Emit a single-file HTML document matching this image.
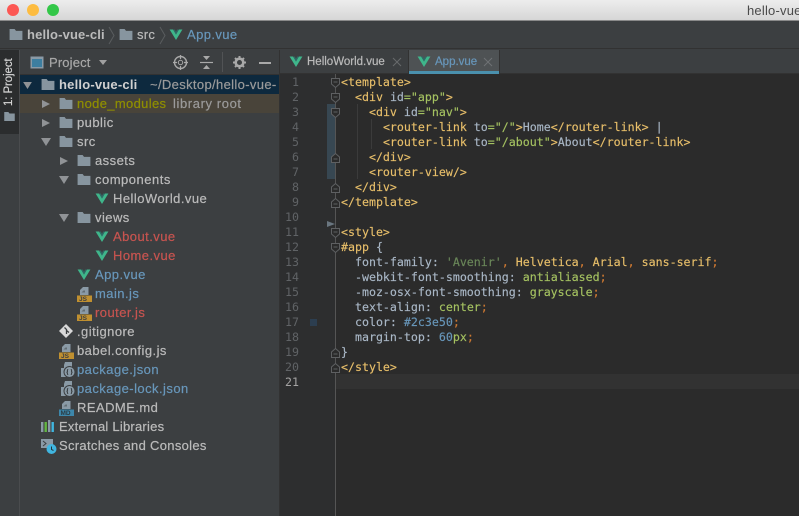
<!DOCTYPE html>
<html><head><meta charset="utf-8">
<style>
*{box-sizing:border-box}
html,body{margin:0;padding:0;width:799px;height:516px;overflow:hidden;background:#3c3f41}
body{position:relative;font-family:"Liberation Sans",sans-serif;font-size:13px;color:#bbb}
.a{position:absolute}
.t{position:absolute;white-space:pre;line-height:19px;height:19px;letter-spacing:.45px;color:#bbbbbb;-webkit-text-stroke:.2px}
svg{position:absolute;overflow:visible}
.c{position:absolute;left:341px;white-space:pre;font-family:"DejaVu Sans Mono","Liberation Mono",monospace;font-size:11.62px;line-height:15px;height:15px;color:#a9b7c6;-webkit-text-stroke:.15px}
.n{position:absolute;left:280px;width:19px;text-align:right;font-family:"DejaVu Sans Mono",monospace;font-size:11.62px;line-height:15px;height:15px;color:#606366}
.y{color:#e8bf6a}.g{color:#a5c261}.o{color:#cc7832}.b{color:#6897bb}.h{color:#a9b7c6}.s{color:#6a8759}
.bl{color:#6897bb}.rd{color:#c75450}
</style></head><body>
<svg width="0" height="0" style="position:absolute"><defs>
<symbol id="f" viewBox="0 0 14 12"><path d="M0 0H5.5L7 2H14V12H0Z" fill="#87959f"/></symbol>
<symbol id="v" viewBox="0 0 14 12"><path d="M0 .5H3.8L7 6 10.2 .5H14L7 12Z" fill="#3fb68b"/><path d="M3.8 .5H5.6L7 3 8.4 .5H10.2L7 6Z" fill="#2f6a66"/></symbol>
<symbol id="js" viewBox="0 0 15 15"><path d="M6 0H11.5V8H3V3Z" fill="#8a9aa6"/><path d="M6.5 3.5L4.5 5.5H8V3.5Z" fill="#3c3f41" opacity=".5"/><rect y="8.5" width="15" height="6.5" fill="#c09030"/><text x="2" y="14" font-family="Liberation Sans,sans-serif" font-size="6.5" font-weight="bold" fill="#3c3f41">JS</text></symbol>
<symbol id="fr" viewBox="0 0 8 10"><path d="M0 1L8 5 0 9Z" fill="#909396"/></symbol>
<symbol id="fd" viewBox="0 0 10 8"><path d="M0 0H10L5 8Z" fill="#909396"/></symbol>
<symbol id="pj" viewBox="0 0 14 16"><path d="M4 0H11V6H3V3Z" fill="#8a9aa6"/><path d="M0 6H9V15H0Z" fill="#8a9aa6"/><circle cx="8.5" cy="10" r="5.5" fill="#8a9aa6" stroke="#3c3f41"/><path d="M7.2 7.5Q6.2 7.5 6.4 9T5.6 10Q6.4 10.3 6.4 11.5T7.2 12.5M9.8 7.5Q10.8 7.5 10.6 9T11.4 10Q10.6 10.3 10.6 11.5T9.8 12.5" fill="none" stroke="#33373a"/></symbol>
</defs></svg>

<!-- title bar -->
<div class="a" style="left:0;top:0;width:799px;height:20px;background:linear-gradient(#ededed,#d6d6d6)"></div>
<div class="a" style="left:0;top:20px;width:799px;height:1px;background:#8a8a8a"></div>
<div class="a" style="left:7px;top:4px;width:12px;height:12px;border-radius:50%;background:#fc5753"></div>
<div class="a" style="left:27px;top:4px;width:12px;height:12px;border-radius:50%;background:#fdbc40"></div>
<div class="a" style="left:47px;top:4px;width:12px;height:12px;border-radius:50%;background:#33c748"></div>
<div class="t" style="left:747px;top:1px;color:#4a4a4a;letter-spacing:.2px;-webkit-text-stroke:0">hello-vue</div>

<!-- breadcrumb -->
<div class="a" style="left:0;top:21px;width:799px;height:28px;background:#3c3f41;border-bottom:1px solid #323232"></div>
<svg style="left:9px;top:29px" width="14" height="11"><use href="#f" width="14" height="11"/></svg>
<div class="t" style="left:27px;top:25px;font-weight:bold;letter-spacing:.15px;-webkit-text-stroke:0">hello-vue-cli</div>
<svg style="left:108px;top:27px" width="8" height="17"><path d="M1 0L6 8.5 1 17" fill="none" stroke="#5a5d5f"/></svg>
<svg style="left:119px;top:29px" width="14" height="11"><use href="#f" width="14" height="11"/></svg>
<div class="t" style="left:137px;top:25px;letter-spacing:.3px">src</div>
<svg style="left:159px;top:27px" width="8" height="17"><path d="M1 0L6 8.5 1 17" fill="none" stroke="#5a5d5f"/></svg>
<svg style="left:169px;top:29px" width="14" height="11"><use href="#v" width="14" height="11"/></svg>
<div class="t" style="left:187px;top:25px;color:#6897bb;letter-spacing:.4px">App.vue</div>

<!-- left stripe -->
<div class="a" style="left:0;top:50px;width:19px;height:466px;background:#3c3f41"></div>
<div class="a" style="left:0;top:50px;width:19px;height:84px;background:#2b2d2e"></div>
<div class="a" style="left:19px;top:50px;width:1px;height:466px;background:#4a4c4e"></div>
<div class="a" style="left:2px;top:106px;white-space:pre;transform-origin:0 0;transform:rotate(-90deg);font-size:11.5px;line-height:15px;color:#d8d8d8;letter-spacing:-.1px;-webkit-text-stroke:.15px">1: Project</div>
<svg style="left:4px;top:112px" width="11" height="9"><use href="#f" width="11" height="9"/></svg>

<!-- project panel header -->
<svg style="left:30px;top:56px" width="14" height="13"><rect x=".5" y=".5" width="13" height="12" fill="#8a9aa6"/><rect x="2" y="3" width="10" height="8" fill="#3d7ea0"/></svg>
<div class="t" style="left:49px;top:53px;letter-spacing:.15px;color:#a8a8a8">Project</div>
<svg style="left:99px;top:60px" width="9" height="6"><path d="M0 0H8L4 5Z" fill="#a0a0a0"/></svg>
<svg style="left:173px;top:55px" width="15" height="15"><circle cx="7.5" cy="7.5" r="6" fill="none" stroke="#a9a9a9" stroke-width="1.4"/><circle cx="7.5" cy="7.5" r="2.2" fill="none" stroke="#a9a9a9"/><path d="M7.5 0V4M7.5 11V15M0 7.5H4M11 7.5H15" stroke="#a9a9a9" stroke-width="1.2"/></svg>
<svg style="left:200px;top:55px" width="13" height="15"><path d="M0 7.5H13" stroke="#a9a9a9" stroke-width="1.2"/><path d="M3 1H10L6.5 5ZM3 14H10L6.5 10Z" fill="#a9a9a9"/></svg>
<div class="a" style="left:222px;top:52px;width:1px;height:20px;background:#515355"></div>
<svg style="left:233px;top:56px" width="13" height="13"><circle cx="6.5" cy="6.5" r="3.8" fill="none" stroke="#a9a9a9" stroke-width="2.6"/><path d="M6.5 0V2.5M6.5 10.5V13M0 6.5H2.5M10.5 6.5H13M2 2L3.7 3.7M9.3 9.3L11 11M11 2L9.3 3.7M3.7 9.3L2 11" stroke="#a9a9a9" stroke-width="2"/></svg>
<div class="a" style="left:259px;top:62px;width:12px;height:1.5px;background:#a9a9a9"></div>
<div class="a" style="left:20px;top:74px;width:259px;height:1px;background:#323232"></div>

<!-- tree rows -->
<div class="a" style="left:20px;top:75px;width:259px;height:19px;background:#0d293e"></div>
<div class="a" style="left:20px;top:94px;width:259px;height:19px;background:#49443a"></div>

<svg style="left:23px;top:82px" width="9" height="7"><use href="#fd" width="9" height="7"/></svg>
<svg style="left:41px;top:79px" width="14" height="11"><use href="#f" width="14" height="11"/></svg>
<div class="t" style="left:59px;top:75px;font-weight:bold;color:#d0d0d0;letter-spacing:.2px;-webkit-text-stroke:0">hello-vue-cli</div>
<div class="t" style="left:150px;top:75px;width:126px;overflow:hidden;color:#9a9a9a;letter-spacing:.35px">~/Desktop/hello-vue-</div>

<svg style="left:42px;top:99px" width="8" height="10"><use href="#fr" width="8" height="10"/></svg>
<svg style="left:59px;top:98px" width="14" height="11"><use href="#f" width="14" height="11"/></svg>
<div class="t" style="left:77px;top:94px;color:#8f8f00;letter-spacing:.34px">node_modules</div>
<div class="t" style="left:173px;top:94px;color:#9a9a9a;letter-spacing:.6px">library root</div>

<svg style="left:42px;top:118px" width="8" height="10"><use href="#fr" width="8" height="10"/></svg>
<svg style="left:59px;top:117px" width="14" height="11"><use href="#f" width="14" height="11"/></svg>
<div class="t" style="left:77px;top:113px">public</div>

<svg style="left:41px;top:138px" width="10" height="8"><use href="#fd" width="10" height="8"/></svg>
<svg style="left:59px;top:136px" width="14" height="11"><use href="#f" width="14" height="11"/></svg>
<div class="t" style="left:77px;top:132px">src</div>

<svg style="left:60px;top:156px" width="8" height="10"><use href="#fr" width="8" height="10"/></svg>
<svg style="left:77px;top:155px" width="14" height="11"><use href="#f" width="14" height="11"/></svg>
<div class="t" style="left:95px;top:151px">assets</div>

<svg style="left:59px;top:176px" width="10" height="8"><use href="#fd" width="10" height="8"/></svg>
<svg style="left:77px;top:174px" width="14" height="11"><use href="#f" width="14" height="11"/></svg>
<div class="t" style="left:95px;top:170px;letter-spacing:.5px">components</div>

<svg style="left:95px;top:193px" width="14" height="11"><use href="#v" width="14" height="11"/></svg>
<div class="t" style="left:113px;top:189px">HelloWorld.vue</div>

<svg style="left:59px;top:214px" width="10" height="8"><use href="#fd" width="10" height="8"/></svg>
<svg style="left:77px;top:212px" width="14" height="11"><use href="#f" width="14" height="11"/></svg>
<div class="t" style="left:95px;top:208px">views</div>

<svg style="left:95px;top:231px" width="14" height="11"><use href="#v" width="14" height="11"/></svg>
<div class="t" style="left:113px;top:227px;color:#c75450">About.vue</div>

<svg style="left:95px;top:250px" width="14" height="11"><use href="#v" width="14" height="11"/></svg>
<div class="t" style="left:113px;top:246px;color:#c75450">Home.vue</div>

<svg style="left:77px;top:269px" width="14" height="11"><use href="#v" width="14" height="11"/></svg>
<div class="t" style="left:95px;top:265px;color:#6897bb">App.vue</div>

<svg style="left:77px;top:287px" width="15" height="15"><use href="#js" width="15" height="15"/></svg>
<div class="t" style="left:95px;top:284px;color:#6897bb">main.js</div>

<svg style="left:77px;top:306px" width="15" height="15"><use href="#js" width="15" height="15"/></svg>
<div class="t" style="left:95px;top:303px;color:#c75450">router.js</div>

<svg style="left:59px;top:324px" width="14" height="14"><path d="M7 0L14 7 7 14 0 7Z" fill="#d8d8d8"/><path d="M5.5 3.5L7.5 5.5V10M7.5 6.5L10 8.5" stroke="#3c3f41" fill="none" stroke-width="1.3"/></svg>
<div class="t" style="left:77px;top:322px">.gitignore</div>

<svg style="left:59px;top:344px" width="15" height="15"><use href="#js" width="15" height="15"/></svg>
<div class="t" style="left:77px;top:341px">babel.config.js</div>

<svg style="left:61px;top:362px" width="14" height="16"><use href="#pj" width="14" height="16"/></svg>
<div class="t" style="left:77px;top:360px;color:#6897bb">package.json</div>

<svg style="left:61px;top:381px" width="14" height="16"><use href="#pj" width="14" height="16"/></svg>
<div class="t" style="left:77px;top:379px;color:#6897bb">package-lock.json</div>

<svg style="left:59px;top:401px" width="15" height="15"><path d="M6 0H11.5V8H3V3Z" fill="#8a9aa6"/><path d="M6.5 3.5L4.5 5.5H8V3.5Z" fill="#3c3f41" opacity=".5"/><rect y="8.5" width="15" height="6.5" fill="#3d87ab"/><text x="1.5" y="14" font-family="Liberation Sans,sans-serif" font-size="6.5" font-weight="bold" fill="#2b3a42">MD</text></svg>
<div class="t" style="left:77px;top:398px">README.md</div>

<svg style="left:41px;top:420px" width="14" height="12"><rect y="2" width="2.4" height="10" fill="#8a9aa6"/><rect x="3.5" y="2" width="2.4" height="10" fill="#62b543"/><rect x="7" y="0" width="2.4" height="12" fill="#8a9aa6"/><rect x="10.5" y="2" width="2.4" height="10" fill="#40b6e0"/></svg>
<div class="t" style="left:59px;top:417px;letter-spacing:.23px">External Libraries</div>

<svg style="left:41px;top:438px" width="15" height="16"><path d="M0 1H12V10H0Z" fill="#8a9aa6"/><path d="M2 3L5 5.5 2 8" stroke="#3c3f41" fill="none"/><circle cx="10.5" cy="11" r="5" fill="#40b6e0"/><path d="M10.5 8.5V11.5L12.5 12.5" stroke="#24343c" fill="none"/></svg>
<div class="t" style="left:59px;top:436px;letter-spacing:.31px">Scratches and Consoles</div>

<!-- tab bar -->
<div class="a" style="left:279px;top:50px;width:1px;height:466px;background:#323232"></div>
<div class="a" style="left:280px;top:50px;width:519px;height:24px;background:#3c3f41;border-bottom:1px solid #323232"></div>
<div class="a" style="left:408px;top:50px;width:91px;height:24px;background:#4e5254;border-bottom:3px solid #4a90ad"></div>
<div class="a" style="left:408px;top:50px;width:1px;height:24px;background:#323232"></div>
<div class="a" style="left:499px;top:50px;width:1px;height:24px;background:#323232"></div>
<svg style="left:289px;top:56px" width="14" height="11"><use href="#v" width="14" height="11"/></svg>
<div class="t" style="left:307px;top:53px;font-size:11.5px;letter-spacing:0">HelloWorld.vue</div>
<svg style="left:393px;top:58px" width="8" height="8"><path d="M0 0L8 8M8 0L0 8" stroke="#686a6c"/></svg>
<svg style="left:417px;top:56px" width="14" height="11"><use href="#v" width="14" height="11"/></svg>
<div class="t" style="left:435px;top:53px;font-size:11.5px;letter-spacing:0;color:#6897bb">App.vue</div>
<svg style="left:484px;top:58px" width="8" height="8"><path d="M0 0L8 8M8 0L0 8" stroke="#6f7274"/></svg>

<!-- editor -->
<div class="a" style="left:280px;top:74px;width:519px;height:442px;background:#2b2b2b"></div>
<div class="a" style="left:280px;top:74px;width:55px;height:442px;background:#2d2e2f"></div>
<div class="a" style="left:336px;top:374px;width:463px;height:15px;background:#323232"></div>
<div class="a" style="left:335px;top:74px;width:1px;height:442px;background:#555"></div>
<div class="a" style="left:327px;top:104px;width:8px;height:75px;background:#374752"></div>
<div class="a" style="left:310px;top:319px;width:7px;height:7px;background:#2c3e50"></div>
<svg style="left:327px;top:221px" width="8" height="6"><path d="M0 0L8 3 0 6Z" fill="#6a7680"/></svg>

<!-- fold markers -->
<svg style="left:330px;top:78px" width="12" height="300" fill="#2b2b2b" stroke="#5e6062" stroke-width="1">
<path d="M1.5 .5H9.5V6L5.5 9.5 1.5 6ZM3.5 4H7.5"/>
<path transform="translate(0,15)" d="M1.5 .5H9.5V6L5.5 9.5 1.5 6ZM3.5 4H7.5"/>
<path transform="translate(0,30)" d="M1.5 .5H9.5V6L5.5 9.5 1.5 6ZM3.5 4H7.5"/>
<path transform="translate(0,75)" d="M1.5 9.5H9.5V4L5.5 .5 1.5 4ZM3.5 6H7.5"/>
<path transform="translate(0,105)" d="M1.5 9.5H9.5V4L5.5 .5 1.5 4ZM3.5 6H7.5"/>
<path transform="translate(0,120)" d="M1.5 9.5H9.5V4L5.5 .5 1.5 4ZM3.5 6H7.5"/>
<path transform="translate(0,150)" d="M1.5 .5H9.5V6L5.5 9.5 1.5 6ZM3.5 4H7.5"/>
<path transform="translate(0,165)" d="M1.5 .5H9.5V6L5.5 9.5 1.5 6ZM3.5 4H7.5"/>
<path transform="translate(0,270)" d="M1.5 9.5H9.5V4L5.5 .5 1.5 4ZM3.5 6H7.5"/>
<path transform="translate(0,285)" d="M1.5 9.5H9.5V4L5.5 .5 1.5 4ZM3.5 6H7.5"/>
</svg>
<!-- indent guides -->
<div class="a" style="left:357px;top:104px;width:1px;height:75px;background:#3b3b3b"></div>
<div class="a" style="left:371px;top:119px;width:1px;height:30px;background:#3b3b3b"></div>

<!-- line numbers -->
<div class="n" style="top:75px">1</div><div class="n" style="top:90px">2</div><div class="n" style="top:105px">3</div><div class="n" style="top:120px">4</div><div class="n" style="top:135px">5</div><div class="n" style="top:150px">6</div><div class="n" style="top:165px">7</div><div class="n" style="top:180px">8</div><div class="n" style="top:195px">9</div><div class="n" style="top:210px">10</div><div class="n" style="top:225px">11</div><div class="n" style="top:240px">12</div><div class="n" style="top:255px">13</div><div class="n" style="top:270px">14</div><div class="n" style="top:285px">15</div><div class="n" style="top:300px">16</div><div class="n" style="top:315px">17</div><div class="n" style="top:330px">18</div><div class="n" style="top:345px">19</div><div class="n" style="top:360px">20</div><div class="n" style="top:375px;color:#a4a3a3">21</div>

<!-- code -->
<div class="c y" style="top:75px">&lt;template&gt;</div>
<div class="c" style="top:90px">  <span class="y">&lt;div</span> id<span class="g">="app"</span><span class="y">&gt;</span></div>
<div class="c" style="top:105px">    <span class="y">&lt;div</span> id<span class="g">="nav"</span><span class="y">&gt;</span></div>
<div class="c" style="top:120px">      <span class="y">&lt;router-link</span> to<span class="g">="/"</span><span class="y">&gt;</span>Home<span class="y">&lt;/router-link&gt;</span> |</div>
<div class="c" style="top:135px">      <span class="y">&lt;router-link</span> to<span class="g">="/about"</span><span class="y">&gt;</span>About<span class="y">&lt;/router-link&gt;</span></div>
<div class="c y" style="top:150px">    &lt;/div&gt;</div>
<div class="c y" style="top:165px">    &lt;router-view/&gt;</div>
<div class="c y" style="top:180px">  &lt;/div&gt;</div>
<div class="c y" style="top:195px">&lt;/template&gt;</div>
<div class="c y" style="top:225px">&lt;style&gt;</div>
<div class="c" style="top:240px"><span class="y">#app</span> {</div>
<div class="c" style="top:255px">  font-family: <span class="s">'Avenir'</span><span class="o">,</span> <span class="y">Helvetica</span><span class="o">,</span> <span class="y">Arial</span><span class="o">,</span> <span class="y">sans-serif</span><span class="o">;</span></div>
<div class="c" style="top:270px">  -webkit-font-smoothing: <span class="g">antialiased</span><span class="o">;</span></div>
<div class="c" style="top:285px">  -moz-osx-font-smoothing: <span class="g">grayscale</span><span class="o">;</span></div>
<div class="c" style="top:300px">  text-align: <span class="g">center</span><span class="o">;</span></div>
<div class="c" style="top:315px">  color: <span class="b">#2c3e50</span><span class="o">;</span></div>
<div class="c" style="top:330px">  margin-top: <span class="b">60</span><span class="g">px</span><span class="o">;</span></div>
<div class="c" style="top:345px">}</div>
<div class="c y" style="top:360px">&lt;/style&gt;</div>
</body></html>
